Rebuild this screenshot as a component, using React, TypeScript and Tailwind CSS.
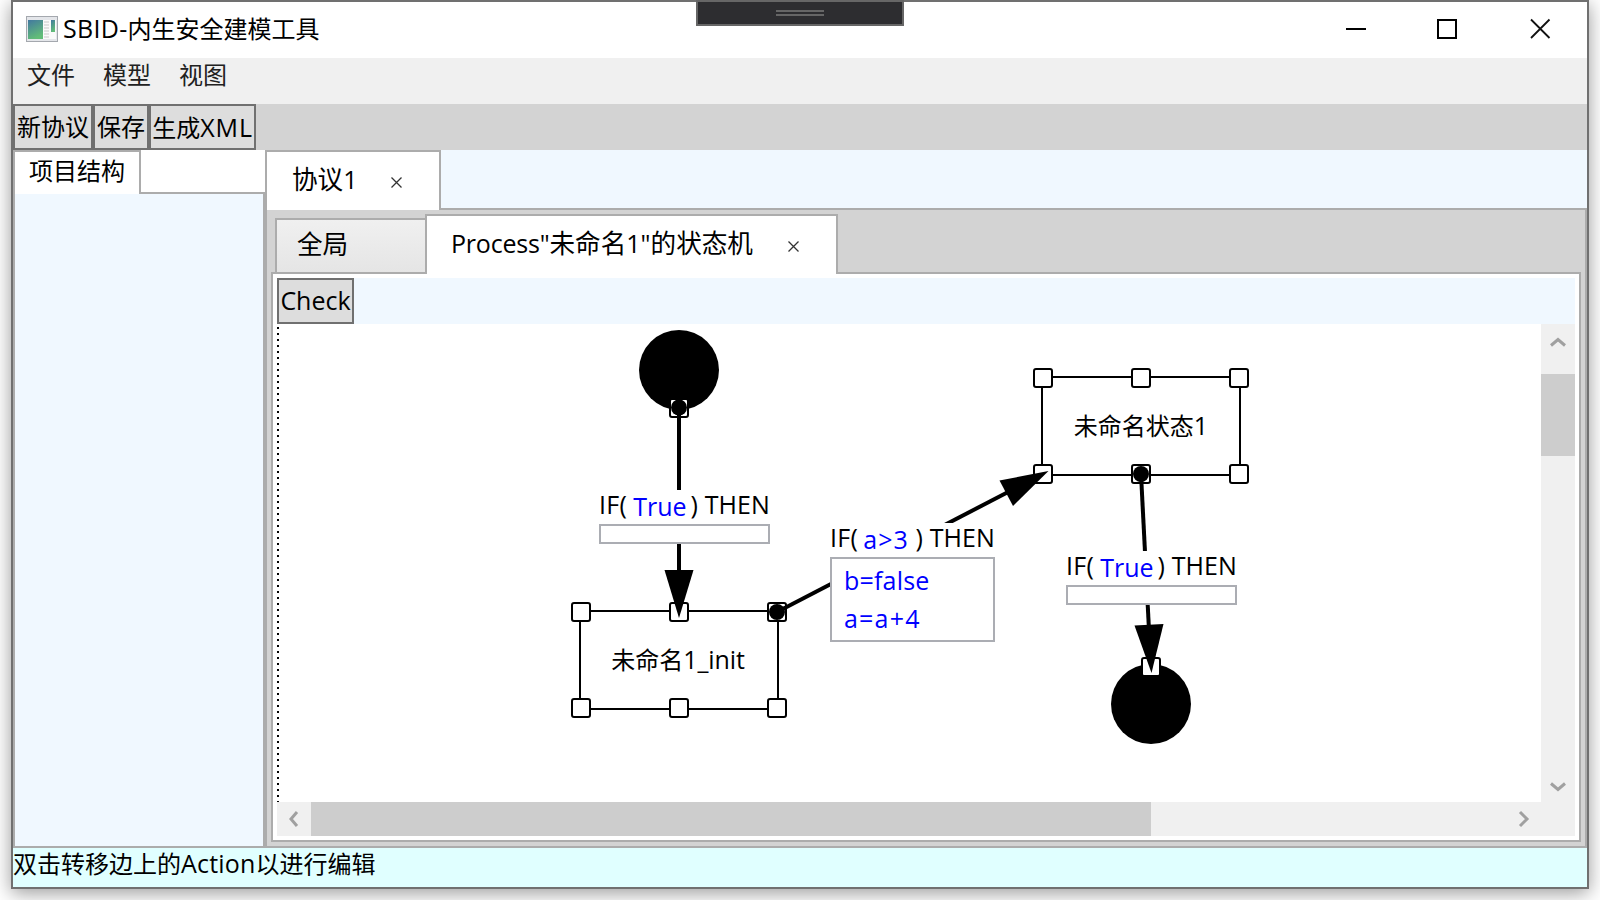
import React from "react";

const UI = "font-['Open_Sans','Noto_Sans_CJK_SC',sans-serif]";

function L({ s = "", children }: { s?: string; children: React.ReactNode }) {
  return <span className={`text-[25px] ${s}`}>{children}</span>;
}

function Handle({ x, y }: { x: number; y: number }) {
  return <rect x={x - 9} y={y - 9} width="18" height="18" rx="2" fill="#fff" stroke="#000" strokeWidth="2" />;
}

function Cond({ place, expr, exprStyle, w, children }: { place: string; expr: string; exprStyle: string; w: string; children?: React.ReactNode }) {
  return (
    <div className={`absolute bg-white ${place} ${w}`}>
      <div className="flex h-[34px] w-full whitespace-pre text-[25px] leading-[28px]">
        <span className="tracking-[0.3px]">IF(</span>
        <span className={`pt-[2px] text-[#0000ff] ${exprStyle}`}>{expr}</span>
        <span className="ml-auto tracking-[0.1px]">) THEN</span>
      </div>
      <div className="min-h-[20px] border-2 border-[#abadb3] bg-white pl-3 text-[#0000ff]">{children}</div>
    </div>
  );
}

function Canvas() {
  return (
    <div className="relative min-w-0 flex-1 overflow-hidden bg-white">
      <svg className="absolute inset-0" width="1264" height="478" viewBox="277 324 1264 478">
        <path d="M278 327V802" stroke="#000" strokeWidth="2" strokeDasharray="2 4" />
        <circle cx="679" cy="370" r="40" />
        <circle cx="1151" cy="704" r="40" />
        <rect x="580" y="611" width="198" height="98" fill="none" stroke="#000" strokeWidth="2" />
        <rect x="1042" y="377" width="198" height="98" fill="none" stroke="#000" strokeWidth="2" />
        <Handle x={679} y={408} />
        <Handle x={581} y={612} /><Handle x={679} y={612} /><Handle x={777} y={612} />
        <Handle x={581} y={708} /><Handle x={679} y={708} /><Handle x={777} y={708} />
        <Handle x={1043} y={378} /><Handle x={1141} y={378} /><Handle x={1239} y={378} />
        <Handle x={1043} y={474} /><Handle x={1141} y={474} /><Handle x={1239} y={474} />
        <Handle x={1151} y={667} />
        <g stroke="#000" strokeWidth="4">
          <path d="M679 408V580" />
          <path d="M777 612L1012 490" />
          <path d="M1141 474L1149 630" />
        </g>
        <circle cx="679" cy="407.5" r="8" /><circle cx="777" cy="612" r="8" /><circle cx="1141" cy="474" r="8" />
        <path d="M679 618L664.5 570H693.5Z" />
        <path d="M1048.500 471L999.500 480.500L1013 506Z" />
        <path d="M1151.500 673L1134.500 625.500L1163.500 624Z" />
      </svg>
      <Cond place="left-[322px] top-[166px]" w="w-[171px]" expr="True" exprStyle="ml-[6px]" />
      <Cond place="left-[553px] top-[199px]" w="w-[165px]" expr="a>3" exprStyle="ml-[5px] tracking-[1.1px]">
        <div className="h-[81px] pt-[2px] text-[25px] leading-[38px]">
          <div className="tracking-[0.2px]">b=false</div>
          <div className="tracking-[1.2px]">a=a+4</div>
        </div>
      </Cond>
      <Cond place="left-[789px] top-[227px]" w="w-[171px]" expr="True" exprStyle="ml-[6px]" />
      <div className="absolute left-[303px] top-[319px] w-[196px] text-center leading-[32px]">未命名<L s="tracking-[-0.1px]">1_init</L></div>
      <div className="absolute left-[766px] top-[85px] w-[196px] text-center leading-[32px]">未命名状态<L>1</L></div>
    </div>
  );
}

function Chevron({ d }: { d: string }) {
  return <svg width="34" height="34" viewBox="0 0 34 34"><path d={d} fill="none" stroke="#a0a0a0" strokeWidth="3" /></svg>;
}

function Cross() {
  return <svg width="11" height="11" viewBox="0 0 11 11"><path d="M.5 .5L10.500 10.500M10.500 .5L.5 10.500" stroke="#333" strokeWidth="1.300" /></svg>;
}

function AppIcon() {
  return (
    <svg width="32" height="26" viewBox="0 0 32 26">
      <defs>
        <linearGradient id="pane" x1="0" y1="0" x2=".4" y2="1"><stop stopColor="#4278a0" /><stop offset="1" stopColor="#62bd78" /></linearGradient>
      </defs>
      <rect x=".5" y=".5" width="31" height="25" fill="#e4e6ea" stroke="#a4a8ae" />
      <rect x="2" y="4" width="15" height="19" fill="url(#pane)" />
      <rect x="17" y="4" width="13" height="19" fill="#fafafa" />
      <path d="M18 6h5M18 9h5M18 12h5M18 15h5M18 18h5M18 21h5" stroke="#c8c8c8" />
      <rect x="25" y="4" width="4" height="12" fill="url(#pane)" />
    </svg>
  );
}

export default function App() {
  return (
    <div className={`relative h-[900px] w-[1600px] overflow-hidden bg-white pl-[11px] text-[24px] leading-[32px] text-black ${UI}`}>
      <div className="flex h-[889px] w-[1578px] flex-col border-2 border-[#707070] bg-white shadow-[0_4px_18px_rgba(0,0,0,0.4)]">
        <header className="flex h-[56px] shrink-0 items-center pb-[2px] pl-[13px]">
          <AppIcon />
          <div className="ml-[5px] flex-1 whitespace-nowrap pb-[2px]"><L s="tracking-[0.3px]">SBID-</L>内生安全建模工具</div>
          <svg className="mr-[35px]" width="206" height="22" viewBox="0 0 206 22">
            <path d="M0 11H20" stroke="#000" strokeWidth="2" />
            <rect x="92" y="2" width="18" height="18" fill="none" stroke="#000" strokeWidth="2" />
            <path d="M185 1.500L203.500 20M203.500 1.500L185 20" stroke="#111" strokeWidth="1.800" />
          </svg>
        </header>
        <nav className="flex h-[46px] shrink-0 gap-[28px] bg-[#f0f0f0] pl-[14px] pt-[1px] text-[#212121]">
          <span>文件</span><span>模型</span><span>视图</span>
        </nav>
        <div className="flex h-[46px] shrink-0 whitespace-nowrap bg-[#d3d3d3]">
          <button className="w-[80px] border-2 border-[#707070] bg-[#ddd]">新协议</button>
          <button className="w-[56px] border-2 border-[#707070] bg-[#ddd]">保存</button>
          <button className="w-[107px] border-2 border-[#707070] bg-[#ddd]">生成<L s="tracking-[0.9px]">XML</L></button>
        </div>
        <main className="flex h-[698px] shrink-0">
          <aside className="flex w-[252px] flex-col">
            <div className="flex h-[44px]">
              <div className="w-[128px] border-2 border-b-0 border-[#acacac] pl-[14px] pt-[3px]">项目结构</div>
              <div className="flex-1 border-b-2 border-[#acacac]" />
            </div>
            <div className="flex-1 border-2 border-t-0 border-[#acacac] bg-[#f0f8ff]" />
          </aside>
          <section className="flex min-w-0 flex-1 flex-col">
            <div className="flex h-[60px] shrink-0">
              <div className="flex w-[176px] items-center border-2 border-b-0 border-[#acacac] pb-[3px] pl-[25px] text-[25.6px]">
                <span className="w-[64px] whitespace-nowrap">协议<L>1</L></span><span className="ml-[35px] mt-[5px]"><Cross /></span>
              </div>
              <div className="flex-1 border-b-2 border-[#acacac] bg-[#f0f8ff]" />
            </div>
            <div className="flex flex-1 flex-col border-2 border-t-0 border-[#acacac] bg-[#d3d3d3] px-[4px] pb-[4px] pt-[4px]">
              <div className="flex h-[60px] shrink-0">
                <div className="flex w-[4px] items-end"><div className="h-[2px] w-full bg-[#acacac]" /></div>
                <div className="mt-[4px] w-[150px] border-2 border-r-0 border-[#acacac] bg-gradient-to-b from-[#f0f0f0] to-[#e5e5e5] pl-[20px] pt-[9px] text-[25.6px]">全局</div>
                <div className="flex w-[413px] items-center whitespace-nowrap border-2 border-b-0 border-[#acacac] bg-white pb-[3px] pl-[24px] text-[25.6px]">
                  <span className="w-[303px]"><L s="tracking-[-0.2px]">Process"</L>未命名<L>1"</L>的状态机</span><span className="ml-[34px] mt-[5px]"><Cross /></span>
                </div>
                <div className="flex-1 border-b-2 border-[#acacac]" />
              </div>
              <div className="flex flex-1 flex-col border-2 border-t-0 border-[#acacac] bg-white px-[4px] pb-[4px] pt-[4px]">
                <div className="h-[46px] shrink-0 bg-[#f0f8ff]">
                  <button className="h-full w-[77px] border-2 border-[#707070] bg-[#ddd] pb-[2px]"><L>Check</L></button>
                </div>
                <div className="flex h-[478px] shrink-0">
                  <Canvas />
                  <div className="flex w-[34px] flex-col bg-[#f0f0f0]">
                    <div className="h-[50px]"><Chevron d="M10 21.500L17 15.500L24 21.500" /></div>
                    <div className="h-[82px] bg-[#cdcdcd]" />
                    <div className="mt-auto h-[34px]"><Chevron d="M10 15.500L17 21.500L24 15.500" /></div>
                  </div>
                </div>
                <div className="flex h-[34px] shrink-0 bg-[#f0f0f0]">
                  <Chevron d="M20 10L14 17L20 24" />
                  <div className="w-[840px] bg-[#cdcdcd]" />
                  <div className="ml-auto mr-[34px]"><Chevron d="M13 10L20 17L13 24" /></div>
                </div>
              </div>
            </div>
          </section>
        </main>
        <footer className="flex-1 bg-[#e0ffff] leading-[30px]">双击转移边上的<L s="tracking-[0.2px]">Action</L>以进行编辑</footer>
      </div>
      <div className="absolute left-[696px] top-0 flex h-[26px] w-[208px] flex-col items-center gap-[2px] border-2 border-[#666] bg-[#2d2d30] pt-[8px]">
        <div className="h-[2px] w-[48px] bg-[#666]" /><div className="h-[2px] w-[48px] bg-[#666]" />
      </div>
    </div>
  );
}
